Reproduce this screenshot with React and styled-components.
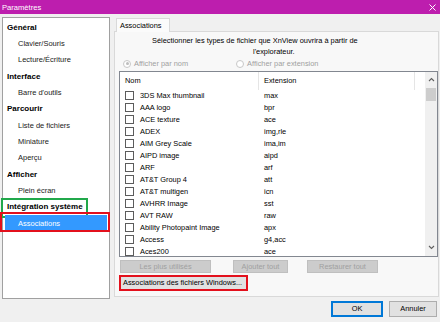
import React from 'react';
import styled, { createGlobalStyle } from 'styled-components';

const GlobalStyle = createGlobalStyle`
  html, body {
    margin: 0;
    padding: 0;
    background: #f0f0f0;
  }
  body {
    font-family: "Liberation Sans", Arial, sans-serif;
    font-size: 7.4px;
    color: #000;
  }
`;

const Window = styled.div`
  width: 440px;
  height: 322px;
  display: flex;
  flex-direction: column;
  background: #f0f0f0;
  overflow: hidden;
`;

const TitleBar = styled.div`
  height: 14px;
  flex: none;
  display: flex;
  align-items: center;
  justify-content: space-between;
  padding: 0 4px 0 2px;
  background: #bd1eae;
  color: #fff;
  font-size: 7.6px;
`;

const CloseIcon = styled.svg`
  width: 7px;
  height: 7px;
`;

const Body = styled.div`
  flex: 1;
  display: flex;
  gap: 4px;
  padding: 3px 1px 0 2px;
  min-height: 0;
`;

const Nav = styled.div`
  position: relative;
  width: 106px;
  height: 279px;
  flex: none;
  background: #fff;
  border: 1px solid #a0a0a0;
  padding-top: 1px;
`;

const NavItem = styled.div`
  position: relative;
  height: 16.33px;
  display: flex;
  align-items: center;
  padding-left: ${p => (p.$bold ? '4px' : '15px')};
  font-weight: ${p => (p.$bold ? 700 : 400)};
  font-size: ${p => (p.$bold ? '8px' : '7.5px')};
  color: ${p => (p.$bold ? '#000' : '#222')};
`;

const Selected = styled.div`
  position: relative;
  height: 16.33px;
  margin: 0 2px;
  display: flex;
  align-items: center;
  padding-left: 13px;
  background: #3399ff;
  color: #fff;
  font-size: 7.5px;
`;

const Mark = styled.span`
  position: absolute;
  pointer-events: none;
  border: 2px solid ${p => p.$color};
`;

const Tabs = styled.div`
  flex: 1;
  display: flex;
  flex-direction: column;
  min-width: 0;
`;

const TabStrip = styled.div`
  height: 14px;
  display: flex;
  padding-left: 2px;
`;

const Tab = styled.div`
  width: 49px;
  display: flex;
  align-items: center;
  padding-left: 3px;
  background: #fbfbfb;
  border: 1px solid #d9d9d9;
  border-bottom: none;
  font-size: 7.4px;
  position: relative;
  top: 1px;
`;

const Panel = styled.div`
  height: 266px;
  background: #f8f8f8;
  border: 1px solid #d9d9d9;
  display: flex;
  flex-direction: column;
  padding: 3px 0 0 4px;
`;

const Caption = styled.div`
  line-height: 11px;
  font-size: 7.4px;
  padding-left: ${p => p.$indent}px;
`;

const RadioRow = styled.div`
  height: 14px;
  display: flex;
  align-items: center;
  padding-left: 4px;
  gap: 48px;
  color: #a0a0a0;
`;

const Radio = styled.label`
  display: flex;
  align-items: center;
  gap: 3px;
`;

const RadioDot = styled.span`
  width: 6px;
  height: 6px;
  border-radius: 50%;
  border: 1px solid #c8c8c8;
  background: #fff;
  display: flex;
  align-items: center;
  justify-content: center;
  &::after {
    content: '';
    width: 3px;
    height: 3px;
    border-radius: 50%;
    background: ${p => (p.$on ? '#bdbdbd' : 'transparent')};
  }
`;

const List = styled.div`
  height: 184px;
  background: #fff;
  border: 1px solid #828790;
  display: flex;
  overflow: hidden;
`;

const ListMain = styled.div`
  flex: 1;
  display: flex;
  flex-direction: column;
  overflow: hidden;
`;

const HeaderRow = styled.div`
  height: 18px;
  flex: none;
  display: grid;
  grid-template-columns: 139px 156px 1fr;
  align-items: center;
`;

const HeaderCell = styled.div`
  height: 100%;
  display: flex;
  align-items: center;
  padding-left: 5px;
  border-right: 1px solid #e5e5e5;
`;

const Row = styled.div`
  height: 12px;
  flex: none;
  display: grid;
  grid-template-columns: 139px 1fr;
  align-items: center;
`;

const NameCell = styled.div`
  display: flex;
  align-items: center;
  gap: 6px;
  padding-left: 5px;
  white-space: nowrap;
`;

const Check = styled.span`
  width: 7px;
  height: 7px;
  border: 1px solid #5c5c5c;
  background: #fff;
  flex: none;
`;

const ExtCell = styled.div`
  padding-left: 5px;
`;

const ScrollBar = styled.div`
  width: 12px;
  flex: none;
  background: #f0f0f0;
  display: flex;
  flex-direction: column;
  align-items: center;
`;

const ScrollArrow = styled.div`
  height: 16px;
  width: 100%;
  display: flex;
  align-items: center;
  justify-content: center;
  background: #f0f0f0;
`;

const Thumb = styled.div`
  width: 10px;
  height: 13px;
  background: #cdcdcd;
`;

const Track = styled.div`
  flex: 1;
`;

const ButtonRow = styled.div`
  display: flex;
  margin-top: 3px;
  padding-left: 1px;
`;

const Button = styled.div`
  height: ${p => p.$h || 13}px;
  width: ${p => p.$w}px;
  margin-left: ${p => p.$ml || 0}px;
  flex: none;
  box-sizing: border-box;
  display: flex;
  align-items: center;
  justify-content: center;
  font-size: 7.4px;
  background: ${p => (p.$disabled ? '#cccccc' : '#e1e1e1')};
  color: ${p => (p.$disabled ? '#a0a0a0' : '#000')};
  border: 1px solid ${p => (p.$disabled ? '#bfbfbf' : p.$default ? '#0078d7' : '#adadad')};
  box-shadow: ${p => (p.$default ? 'inset 0 0 0 1px #0078d7' : 'none')};
`;

const WindowsButtonFrame = styled.div`
  margin-top: 2px;
  width: 129px;
  height: 16px;
  box-sizing: border-box;
  border: 2px solid #e3101c;
  display: flex;
  align-items: center;
  padding-left: 2px;
  background: #e1e1e1;
  font-size: 7.4px;
  white-space: nowrap;
`;

const Footer = styled.div`
  height: 25px;
  flex: none;
  display: flex;
  align-items: center;
  justify-content: flex-end;
  gap: 6px;
  padding: 0 3px 2px 0;
  box-sizing: border-box;
`;

const sections = [
  { label: 'Général', bold: true },
  { label: 'Clavier/Souris' },
  { label: 'Lecture/Écriture' },
  { label: 'Interface', bold: true },
  { label: "Barre d'outils" },
  { label: 'Parcourir', bold: true },
  { label: 'Liste de fichiers' },
  { label: 'Miniature' },
  { label: 'Aperçu' },
  { label: 'Afficher', bold: true },
  { label: 'Plein écran' },
];

const formats = [
  ['3DS Max thumbnail', 'max'],
  ['AAA logo', 'bpr'],
  ['ACE texture', 'ace'],
  ['ADEX', 'img,rle'],
  ['AIM Grey Scale', 'ima,im'],
  ['AIPD image', 'aipd'],
  ['ARF', 'arf'],
  ['AT&T Group 4', 'att'],
  ['AT&T multigen', 'icn'],
  ['AVHRR Image', 'sst'],
  ['AVT RAW', 'raw'],
  ['Ability Photopaint Image', 'apx'],
  ['Access', 'g4,acc'],
  ['Aces200', 'ace'],
];

const Chevron = ({ down }) => (
  <svg width="7" height="5" viewBox="0 0 7 5">
    <path d={down ? 'M1 1 L3.5 3.5 L6 1' : 'M1 4 L3.5 1.5 L6 4'} fill="none" stroke="#606060" strokeWidth="1.1" />
  </svg>
);

const App = () => (
  <>
    <GlobalStyle />
    <Window>
      <TitleBar>
        <span>Paramètres</span>
        <CloseIcon viewBox="0 0 7 7">
          <path d="M0.5 0.5 L6.5 6.5 M6.5 0.5 L0.5 6.5" stroke="#fff" strokeWidth="1" />
        </CloseIcon>
      </TitleBar>
      <Body>
        <Nav>
          {sections.map(s => (
            <NavItem key={s.label} $bold={s.bold}>{s.label}</NavItem>
          ))}
          <NavItem $bold>
            Intégration système
            <Mark $color="#21a84b" style={{ left: -2, top: -1, width: 83, height: 16 }} />
          </NavItem>
          <Selected>
            Associations
            <Mark $color="#e3101c" style={{ left: -5, top: -3, width: 106, height: 16 }} />
          </Selected>
        </Nav>
        <Tabs>
          <TabStrip>
            <Tab>Associations</Tab>
          </TabStrip>
          <Panel>
            <Caption $indent={33}>Sélectionner les types de fichier que XnView ouvrira à partir de</Caption>
            <Caption $indent={134}>l'explorateur.</Caption>
            <RadioRow>
              <Radio><RadioDot $on />Afficher par nom</Radio>
              <Radio><RadioDot />Afficher par extension</Radio>
            </RadioRow>
            <List>
              <ListMain>
                <HeaderRow>
                  <HeaderCell>Nom</HeaderCell>
                  <HeaderCell>Extension</HeaderCell>
                </HeaderRow>
                {formats.map(([name, ext]) => (
                  <Row key={name}>
                    <NameCell><Check />{name}</NameCell>
                    <ExtCell>{ext}</ExtCell>
                  </Row>
                ))}
              </ListMain>
              <ScrollBar>
                <ScrollArrow><Chevron /></ScrollArrow>
                <Thumb />
                <Track />
                <ScrollArrow><Chevron down /></ScrollArrow>
              </ScrollBar>
            </List>
            <ButtonRow>
              <Button $disabled $w={91}>Les plus utilisés</Button>
              <Button $disabled $w={55} $ml={22}>Ajouter tout</Button>
              <Button $disabled $w={71} $ml={19}>Restaurer tout</Button>
            </ButtonRow>
            <WindowsButtonFrame>Associations des fichiers Windows...</WindowsButtonFrame>
          </Panel>
        </Tabs>
      </Body>
      <Footer>
        <Button $default $w={52} $h={16}>OK</Button>
        <Button $w={48} $h={16}>Annuler</Button>
      </Footer>
    </Window>
  </>
);

export default App;
